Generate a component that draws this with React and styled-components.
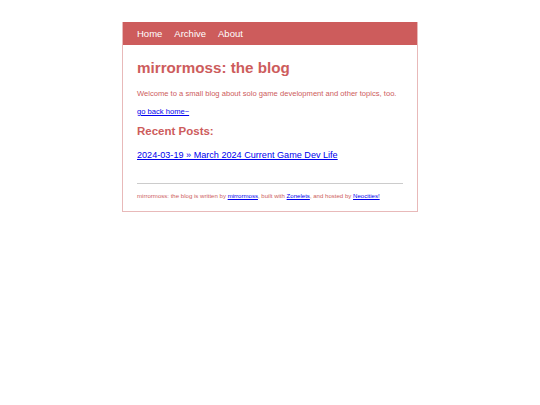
import React from 'react';
import styled, { createGlobalStyle } from 'styled-components';

const GlobalStyle = createGlobalStyle`
  body {
    margin: 0;
    background: #ffffff;
    font-family: "Liberation Sans", Arial, sans-serif;
  }
`;

const Page = styled.div`
  padding-top: 22px;
  display: flex;
  justify-content: center;
`;

const Container = styled.div`
  width: 294px;
  border: 1px solid #e8b9b9;
  border-top: none;
  background: #fff;
`;

const NavBar = styled.nav`
  background: #cd5c5c;
  height: 23px;
  display: flex;
  align-items: center;
  padding: 0 14px;
  gap: 12px;
`;

const NavLink = styled.a`
  color: #fff;
  font-size: 9.5px;
  text-decoration: none;
`;

const Content = styled.main`
  padding: 14px 14px 12px;
  color: #cd5c5c;
  line-height: normal;
`;

const Title = styled.h1`
  margin: 0 0 13px;
  font-size: 15.2px;
  font-weight: bold;
`;

const Para = styled.p`
  margin: 0 0 ${p => p.gap || 0}px;
  font-size: ${p => p.size || 7.6}px;
`;

const Link = styled.a`
  color: #0000ee;
  text-decoration: underline;
`;

const Subtitle = styled.h2`
  margin: 9px 0 13px;
  font-size: 11.5px;
  font-weight: bold;
`;

const PostList = styled.ul`
  list-style: none;
  margin: 0;
  padding: 0;
  font-size: 9.1px;
`;

const Divider = styled.hr`
  border: none;
  border-top: 1px solid #cccccc;
  margin: 23px 0 9px;
`;

const Footer = styled.footer`
  font-size: 6.07px;
  color: #cd5c5c;
`;

export default function App() {
  return (
    <>
      <GlobalStyle />
      <Page>
        <Container>
          <NavBar>
            <NavLink href="#">Home</NavLink>
            <NavLink href="#">Archive</NavLink>
            <NavLink href="#">About</NavLink>
          </NavBar>
          <Content>
            <Title>mirrormoss: the blog</Title>
            <Para gap={9}>Welcome to a small blog about solo game development and other topics, too.</Para>
            <Para>
              <Link href="#">go back home~</Link>
            </Para>
            <Subtitle>Recent Posts:</Subtitle>
            <PostList>
              <li>
                <Link href="#">2024-03-19 » March 2024 Current Game Dev Life</Link>
              </li>
            </PostList>
            <Divider />
            <Footer>
              mirrormoss: the blog is written by <Link href="#">mirrormoss</Link>, built with{' '}
              <Link href="#">Zonelets</Link>, and hosted by <Link href="#">Neocities!</Link>
            </Footer>
          </Content>
        </Container>
      </Page>
    </>
  );
}
